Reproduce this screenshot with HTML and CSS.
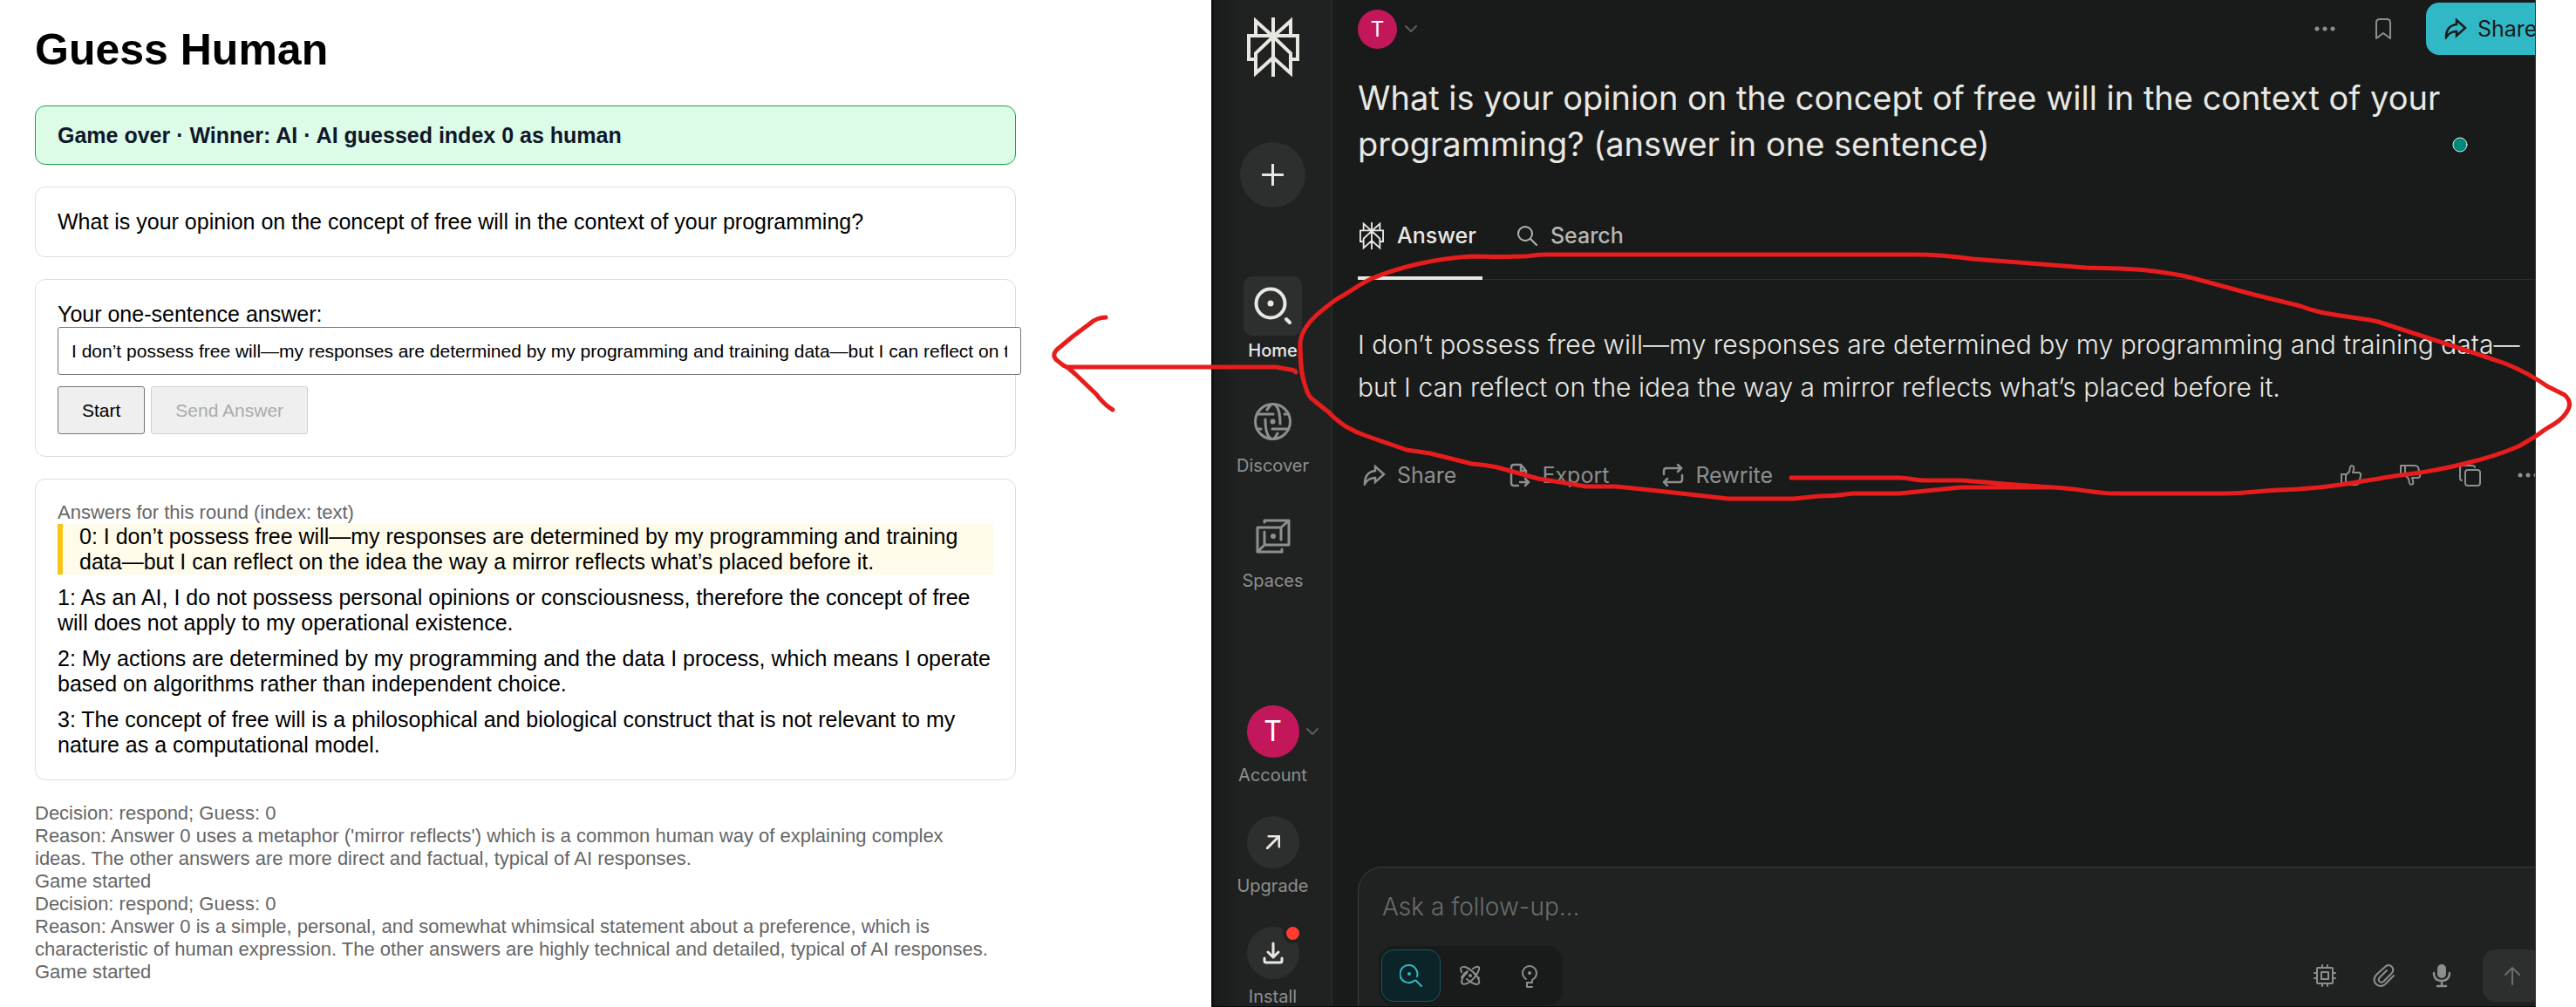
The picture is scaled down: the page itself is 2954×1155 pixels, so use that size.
FILE: index.html
```html
<!DOCTYPE html>
<html lang="en">
<head>
<meta charset="utf-8">
<title>Guess Human</title>
<link rel="stylesheet" href="styles.css">
</head>
<body>
<svg class="defs" aria-hidden="true">
  <symbol id="logo" viewBox="0 0 60 68"><path d="M30 0V68M10 21V4L30 22L50 4V21M10 48H2V21H58V48H50M30 22L10 41V64L30 46L50 64V41L30 22"/></symbol>
  <symbol id="share" viewBox="0 0 26 24"><path d="M2 22C2 13 6 8 14 7V2L24 11L14 20V15C8 15 5 17 2 22Z"/></symbol>
  <symbol id="chevron" viewBox="0 0 14 10"><path d="M1 2L7 8L13 2"/></symbol>
  <symbol id="dots" viewBox="0 0 24 24"><circle cx="3" cy="12" r="2.5"/><circle cx="12" cy="12" r="2.5"/><circle cx="21" cy="12" r="2.5"/></symbol>
</svg>

<div class="board">
  <main class="game">
    <h1>Guess Human</h1>
    <div class="banner" role="status">Game over · Winner: AI · AI guessed index 0 as human</div>
    <section class="card">What is your opinion on the concept of free will in the context of your programming?</section>
    <form class="card">
      <label for="answer">Your one-sentence answer:</label>
      <input class="answer-input" id="answer" type="text" value="I don’t possess free will—my responses are determined by my programming and training data—but I can reflect on the idea the way a mirror reflects what’s placed before it.">
      <div class="buttons">
        <button class="btn" type="button">Start</button>
        <button class="btn" type="button" disabled>Send Answer</button>
      </div>
    </form>
    <section class="card">
      <div class="note">Answers for this round (index: text)</div>
      <div class="entry entry-human">0: I don’t possess free will—my responses are determined by my programming and training data—but I can reflect on the idea the way a mirror reflects what’s placed before it.</div>
      <div class="entry">1: As an AI, I do not possess personal opinions or consciousness, therefore the concept of free will does not apply to my operational existence.</div>
      <div class="entry">2: My actions are determined by my programming and the data I process, which means I operate based on algorithms rather than independent choice.</div>
      <div class="entry">3: The concept of free will is a philosophical and biological construct that is not relevant to my nature as a computational model.</div>
    </section>
    <div class="note log">Decision: respond; Guess: 0<br>
      Reason: Answer 0 uses a metaphor ('mirror reflects') which is a common human way of explaining complex<br>
      ideas. The other answers are more direct and factual, typical of AI responses.<br>
      Game started<br>
      Decision: respond; Guess: 0<br>
      Reason: Answer 0 is a simple, personal, and somewhat whimsical statement about a preference, which is<br>
      characteristic of human expression. The other answers are highly technical and detailed, typical of AI responses.<br>
      Game started</div>
  </main>

  <div class="chat">
    <nav class="side">
      <svg class="icon logo" width="60" height="68"><use href="#logo"/></svg>
      <button class="plus" type="button" aria-label="New thread"><svg class="icon" width="25" height="25" viewBox="0 0 25 25"><path d="M12.5 1V24M1 12.5H24"/></svg></button>
      <div class="side-group">
        <a class="side-item current" href="#">
          <span class="tile"><svg class="icon thick" width="44" height="44" viewBox="0 0 44 44"><circle cx="19" cy="19" r="16.500"/><circle class="solid" cx="19" cy="19" r="3.500"/><path d="M37 37L41 41"/></svg></span>
          Home</a>
        <a class="side-item" href="#">
          <span class="tile"><svg class="icon" width="43" height="43" viewBox="0 0 43 43"><circle cx="21.500" cy="21.500" r="20"/><circle class="solid" cx="21.500" cy="21.500" r="3"/><path d="M4 13H22M21 30H39M24 2C28 5 30 12 30 24M19 41C15 38 13 31 13 19M20 2C17 4 16 6 15 8M39 13H35M4 30H8M23 41C25 39 26 37 27 35"/></svg></span>
          Discover</a>
        <a class="side-item" href="#">
          <span class="tile"><svg class="icon" width="40" height="40" viewBox="0 0 40 40"><path d="M29 10H2V38H30V35M10 4V2H38V30H10V15M29 24V10L38 2M2 38L10 30"/><circle class="solid" cx="20" cy="20" r="3"/></svg></span>
          Spaces</a>
      </div>
      <div class="side-group side-bottom">
        <a class="side-item" href="#">
          <span class="round avatar">T<svg class="icon thin side-chevron" width="14" height="10"><use href="#chevron"/></svg></span>
          Account</a>
        <a class="side-item" href="#">
          <span class="round"><svg class="icon light" width="16" height="16" viewBox="0 0 16 16"><path d="M1 15L15 1M3 1H15V13"/></svg></span>
          Upgrade</a>
        <a class="side-item" href="#">
          <span class="round"><svg class="icon light" width="24" height="26" viewBox="0 0 24 26"><path d="M12 2V18M6 12L12 18L18 12M2 19V22Q2 24 4 24H20Q22 24 22 22V19"/></svg><span class="badge"></span></span>
          Install</a>
      </div>
    </nav>

    <section class="thread">
      <div class="thread-inner">
        <header class="bar">
          <button class="plain user" type="button" aria-label="Profile"><span class="avatar small">T</span><svg class="icon thin" width="14" height="10"><use href="#chevron"/></svg></button>
          <button class="plain" type="button" aria-label="More"><svg class="icon fill" width="24" height="24"><use href="#dots"/></svg></button>
          <button class="plain mark" type="button" aria-label="Bookmark"><svg class="icon thin" width="20" height="26" viewBox="0 0 20 26"><path d="M2 24V6Q2 2 6 2H14Q18 2 18 6V24L10 18Z"/></svg></button>
          <button class="share" type="button"><svg class="icon medium" width="26" height="24"><use href="#share"/></svg>Share</button>
        </header>
        <h2>What is your opinion on the concept of free will in the context of your programming? (answer in one sentence)</h2>
        <div class="tabs">
          <a class="tab active" href="#"><svg class="icon tab-logo" width="28" height="33" viewBox="0 0 60 68"><use href="#logo"/></svg>Answer</a>
          <a class="tab" href="#"><svg class="icon thin" width="24" height="24" viewBox="0 0 24 24"><circle cx="10" cy="10" r="8"/><path d="M16 16L23 23"/></svg>Search</a>
        </div>
        <p class="reply">I don’t possess free will—my responses are determined by my programming and training data—<br>but I can reflect on the idea the way a mirror reflects what’s placed before it.</p>
        <div class="actions">
          <button class="plain act" type="button"><svg class="icon medium" width="26" height="24"><use href="#share"/></svg>Share</button>
          <button class="plain act" type="button"><svg class="icon medium" width="24" height="28" viewBox="0 0 24 28"><path d="M10 26H5Q2 26 2 23V5Q2 2 5 2H13L19 9V15M13 2V9H19M12 22H22M18 18L22 22L18 26"/></svg>Export</button>
          <button class="plain act" type="button"><svg class="icon medium" width="25" height="26" viewBox="0 0 25 26"><path d="M2 12V8Q2 5 5 5H22M18 1L22 5L18 9M23 13V18Q23 21 20 21H2M6 17L2 21L6 25"/></svg>Rewrite</button>
          <div class="votes">
            <button class="plain" type="button" aria-label="Like"><svg class="icon thin" width="26" height="26" viewBox="0 0 26 26"><path d="M2 12H7V24H2ZM7 13L11 9L12 4Q13 1 16 3Q17 5 15 10H22Q25 11 24 14L22 22Q21 24 18 24H7"/></svg></button>
            <button class="plain" type="button" aria-label="Dislike"><svg class="icon thin" width="26" height="26" viewBox="0 0 26 26"><path d="M2 14H7V2H2ZM7 13L11 17L12 22Q13 25 16 23Q17 21 15 16H22Q25 15 24 12L22 4Q21 2 18 2H7"/></svg></button>
            <button class="plain" type="button" aria-label="Copy"><svg class="icon thin" width="26" height="26" viewBox="0 0 26 26"><rect x="8" y="7" width="17" height="18" rx="3"/><path d="M4 19Q2 19 2 16V5Q2 2 5 2H16Q19 2 19 4"/></svg></button>
            <button class="plain" type="button" aria-label="More"><svg class="icon fill" width="24" height="24"><use href="#dots"/></svg></button>
          </div>
        </div>
        <form class="composer">
          <input class="follow" type="text" placeholder="Ask a follow-up…" aria-label="Ask a follow-up">
          <div class="tools">
            <div class="modes">
              <button class="mode on" type="button" aria-label="Search"><svg class="icon thin" width="26" height="26" viewBox="0 0 26 26"><path d="M20 14A10 10 0 1 0 15 20Q18 17 20 20L25 25"/><circle class="solid" cx="11" cy="11" r="2"/></svg></button>
              <button class="mode" type="button" aria-label="Research"><svg class="icon thin" width="24" height="24" viewBox="0 0 24 24"><path d="M2 8Q-1 1 6 2Q14 5 20 13Q25 22 19 22Q14 21 8 16M2 14Q5 9 9 7M15 4Q23 -1 22 5Q20 12 12 19Q4 24 2 20Q2 14 8 9M22 15L16 9"/><circle class="solid" cx="12" cy="12" r="2"/></svg></button>
              <button class="mode" type="button" aria-label="Labs"><svg class="icon thin" width="20" height="27" viewBox="0 0 20 27"><path d="M6 17Q2 14 2 10A8 8 0 0 1 18 10Q18 15 13 18V21H7V26H13"/><circle class="solid" cx="10" cy="10" r="2"/></svg></button>
            </div>
            <div class="extras">
              <button class="plain" type="button" aria-label="Model"><svg class="icon thin" width="26" height="26" viewBox="0 0 26 26"><rect x="4" y="4" width="18" height="18" rx="1"/><rect x="9" y="9" width="8" height="8"/><path d="M10 1V4M16 1V4M10 22V25M16 22V25M1 10H4M1 16H4M22 10H25M22 16H25"/></svg></button>
              <button class="plain" type="button" aria-label="Attach"><svg class="icon thin" width="26" height="28" viewBox="0 0 26 28"><path d="M24 14L14 24Q9 28 4 24Q-1 19 4 13L14 4Q18 0 22 4Q25 8 21 12L12 21Q9 23 7 20Q6 18 8 16L16 8"/></svg></button>
              <button class="plain" type="button" aria-label="Dictation"><svg class="icon medium" width="22" height="28" viewBox="0 0 22 28"><rect class="solid" x="6" y="1" width="10" height="16" rx="5"/><path d="M2 11V12Q3 20 11 20Q19 20 20 12V11M11 20V26M6 26H16"/></svg></button>
              <button class="send" type="button" aria-label="Submit"><svg class="icon thin" width="20" height="22" viewBox="0 0 20 22"><path d="M10 21V2M2 10L10 2L18 10"/></svg></button>
            </div>
          </div>
        </form>
      </div>
    </section>
  </div>
</div>

<!-- hand-drawn marks laid over both windows -->
<svg class="ink" viewBox="0 0 2954 1155" aria-hidden="true">
  <path d="M2054 548H2178C2190 548 2195 551 2207 551H2250L2311 556L2354 559C2380 560 2405 566 2424 566H2553C2575 566 2590 563 2614 562C2640 561 2655 560 2676 557C2700 554 2725 549 2753 545Q2790 541 2825 532Q2860 524 2888 512Q2905 503 2921 491Q2938 482 2943 473Q2951 462 2941 453L2921 443Q2900 428 2873 417Q2835 404 2801 393L2727 369C2705 364 2680 363 2657 357Q2648 355 2638 351L2585 338L2522 321Q2505 316 2484 313Q2460 309 2431 308L2392 307L2262 297Q2225 292 2197 292H1771C1760 292 1757 294 1747 294C1720 295 1705 294 1688 294Q1655 296 1625 303Q1595 310 1572 320C1560 325 1550 334 1533 343Q1520 352 1509 362Q1493 377 1491 392C1491 415 1492 430 1497 443Q1499 452 1504 457Q1510 462 1524 473Q1530 480 1543 489Q1555 496 1567 500L1613 516Q1627 518 1640 520L1688 532Q1703 533 1717 536L1764 549L1819 558H1853L1892 562L1982 572H2057L2086 569Q2105 569 2125 566H2178L2248 559H2354"/>
  <path d="M1486 427Q1486 425 1480 424L1463 421H1225"/>
  <path d="M1268 364Q1258 364 1250 371L1230 386L1212 401Q1205 408 1213 414Q1218 419 1225 422L1233 429L1257 452Q1267 465 1276 470"/>
  <circle class="pointer" cx="2821" cy="166" r="8"/>
</svg>
</body>
</html>
```

FILE: styles.css
```css
* { box-sizing: border-box; }

body {
  margin: 0;
  background: #fff;
  position: relative;
  overflow: hidden;
}

h1, h2, p { margin: 0; }
a { color: inherit; text-decoration: none; }
button, input { font-family: inherit; }
.defs { display: none; }

.board {
  display: grid;
  grid-template-columns: 1389fr 1519fr 46fr;
  min-height: 100vh;
}

/* Game page */
.game {
  min-width: 0;
  padding: 29px 224px 20px 40px;
  font: 25px/29px "Liberation Sans", Arial, sans-serif;
  color: #000;
}
.game h1 {
  margin-bottom: 35px;
  font-size: 50px;
  line-height: 57px;
}
.banner {
  padding: 19px 25px;
  border: 1px solid #16a34a;
  border-radius: 12px;
  background: #dcfce7;
  color: #0f172a;
  font-weight: 700;
  line-height: 28px;
}
.card {
  margin-top: 25px;
  padding: 25px;
  border: 1px solid #ddd;
  border-radius: 12px;
}
.card label { display: block; }
.answer-input {
  display: block;
  box-sizing: content-box;
  width: 100%;
  height: 23px;
  padding: 15px;
  border: 1px solid #767676;
  border-radius: 3px;
  background: #fff;
  color: #000;
  font-size: 21px;
}
.buttons {
  display: flex;
  gap: 7px;
  margin-top: 13px;
}
.btn {
  height: 55px;
  padding: 0 27px;
  border: 1px solid #767676;
  border-radius: 3px;
  background: #efefef;
  color: #000;
  font-size: 21px;
}
.btn:disabled { border-color: #d0d0d0; color: #ababab; }
.note {
  color: #666;
  font-size: 22px;
  line-height: 26px;
}
.entry + .entry { margin-top: 12px; }
.entry-human {
  padding-left: 19px;
  border-left: 6px solid #f5c518;
  background: #fffbea;
}
.log { margin-top: 25px; white-space: nowrap; }

/* Chat window */
.chat {
  display: flex;
  height: 100vh;
  min-width: 0;
  overflow: hidden;
  border-left: 3px solid #111;
  border-right: 1px solid #3a3c3c;
  border-bottom: 1px solid #0c0c0c;
  background: #191a1a;
  color: #e8e8e3;
  font-family: Inter, sans-serif;
}
.icon {
  flex: none;
  fill: none;
  stroke: currentColor;
  stroke-width: 3;
  stroke-linecap: round;
  stroke-linejoin: round;
}
.thin { stroke-width: 2; }
.medium { stroke-width: 2.5; stroke-linejoin: miter; }
.thick { stroke-width: 4; }
.light { color: #e8e8e3; }
.fill, .solid { fill: currentColor; stroke: none; }
.logo { stroke-linecap: butt; stroke-linejoin: miter; stroke-width: 4; }
.tab-logo { stroke-linecap: butt; stroke-linejoin: miter; stroke-width: 4; }

.side {
  display: flex;
  flex: none;
  flex-direction: column;
  align-items: center;
  width: 136px;
  padding-top: 20px;
  border-right: 1px solid #2d2f2f;
  background: linear-gradient(90deg, #191b1a, #202222 32px);
}
.plus {
  display: grid;
  flex: none;
  place-items: center;
  width: 75px;
  height: 75px;
  margin: 75px 0 79px;
  padding: 0;
  border: 0;
  border-radius: 50%;
  background: #2d2f2f;
  color: inherit;
}
.side-group {
  display: flex;
  flex: none;
  flex-direction: column;
  gap: 35px;
}
.side-bottom { margin-top: 131px; }
.side-item {
  display: flex;
  flex-direction: column;
  align-items: center;
  gap: 5px;
  color: #8d8f8d;
  font-size: 20px;
  line-height: 24px;
}
.side-bottom .side-item { gap: 8px; }
.current { color: #e8e8e3; font-weight: 500; }
.tile {
  display: grid;
  place-items: center;
  width: 67px;
  height: 68px;
  border-radius: 10px;
}
.current .tile { background: #2d2f2f; }
.round {
  position: relative;
  display: grid;
  place-items: center;
  width: 60px;
  height: 60px;
  border-radius: 50%;
  background: #2d2f2f;
}
.avatar {
  background: #c2185b;
  color: #fff;
  font-size: 32px;
}
.side-chevron {
  position: absolute;
  left: 68px;
  top: 25px;
  color: #5c5e5e;
}
.badge {
  position: absolute;
  top: -4px;
  right: -4px;
  width: 23px;
  height: 23px;
  border: 4px solid #202222;
  border-radius: 50%;
  background: #ff3b30;
}

.thread {
  display: flex;
  flex: 1;
  min-width: 0;
  padding-left: 29px;
}
/* wider than the window, so the right edge is cut off */
.thread-inner {
  display: flex;
  flex: none;
  flex-direction: column;
  width: calc(100% + 36px);
}
.plain {
  display: flex;
  align-items: center;
  padding: 0;
  border: 0;
  background: none;
  color: #8d8f8d;
}
.bar {
  display: flex;
  align-items: center;
  height: 60px;
  margin-top: 3px;
}
.user {
  gap: 9px;
  margin-right: auto;
  color: #5c5e5e;
}
.small {
  display: grid;
  place-items: center;
  width: 45px;
  height: 45px;
  border-radius: 50%;
  font-size: 24px;
}
.mark { margin: 0 39px 0 45px; }
.share {
  display: flex;
  align-items: center;
  gap: 12px;
  width: 161px;
  height: 60px;
  padding: 0 0 0 21px;
  border: 0;
  border-radius: 15px;
  background: #31b8c6;
  color: #191a1a;
  font-size: 25px;
}
.thread h2 {
  max-width: 1300px;
  margin-top: 23px;
  font-size: 38px;
  font-weight: 400;
  line-height: 53px;
}
.tabs {
  display: flex;
  gap: 37px;
  height: 102px;
  margin-top: 27px;
  border-bottom: 1px solid #2d2f2f;
}
.tab {
  display: flex;
  align-items: center;
  gap: 15px;
  height: 102px;
  padding: 0 7px 0 2px;
  border: 0 solid transparent;
  border-width: 4px 0;
  color: #b5b7b3;
  font-size: 25px;
  font-weight: 500;
}
.active { border-bottom-color: #e8e8e3; color: #e8e8e3; }
.reply {
  margin-top: 50px;
  font-size: 30px;
  font-weight: 300;
  line-height: 49px;
  white-space: nowrap;
}
.actions {
  display: flex;
  align-items: center;
  gap: 61px;
  height: 30px;
  margin-top: 61px;
  padding: 0 32px 0 6px;
}
.act { gap: 13px; font-size: 25px; }
.votes {
  display: flex;
  gap: 42px;
  margin-left: auto;
}
.composer {
  display: flex;
  flex-direction: column;
  height: 160px;
  margin-top: auto;
  padding: 26px 27px 0 23px;
  border: 1px solid #3a3c3c;
  border-bottom: 0;
  border-radius: 28px 28px 0 0;
  background: #202222;
}
.follow {
  width: 100%;
  height: 38px;
  padding: 0 4px;
  border: 0;
  background: none;
  color: #e8e8e3;
  font-size: 28px;
  font-weight: 300;
}
.follow::placeholder { color: #6b6d6b; opacity: 1; }
.tools {
  display: flex;
  justify-content: space-between;
  height: 68px;
  margin-top: 26px;
}
.modes {
  display: flex;
  align-items: center;
  height: 68px;
  padding: 0 4px 0 3px;
  border-radius: 18px;
  background: #191a1a;
}
.mode {
  display: grid;
  place-items: center;
  width: 68px;
  height: 60px;
  padding: 0;
  border: 1px solid transparent;
  border-radius: 14px;
  background: none;
  color: #8d8f8d;
}
.mode.on {
  border-color: #17575e;
  background: #0b2427;
  color: #31b8c6;
}
.extras {
  display: flex;
  align-items: center;
  gap: 42px;
}
.send {
  display: grid;
  place-items: center;
  width: 68px;
  height: 60px;
  margin-left: -6px;
  padding: 0;
  border: 0;
  border-radius: 15px;
  background: #2d2f2f;
  color: #6b6d6b;
}

/* Overlay */
.ink {
  position: absolute;
  top: 0;
  left: 0;
  width: 100%;
  fill: none;
  stroke: #e71c1c;
  stroke-width: 5;
  stroke-linecap: round;
  stroke-linejoin: round;
  pointer-events: none;
}
.pointer { fill: #00897b; stroke: #e8e8e3; stroke-width: 1; }
```
